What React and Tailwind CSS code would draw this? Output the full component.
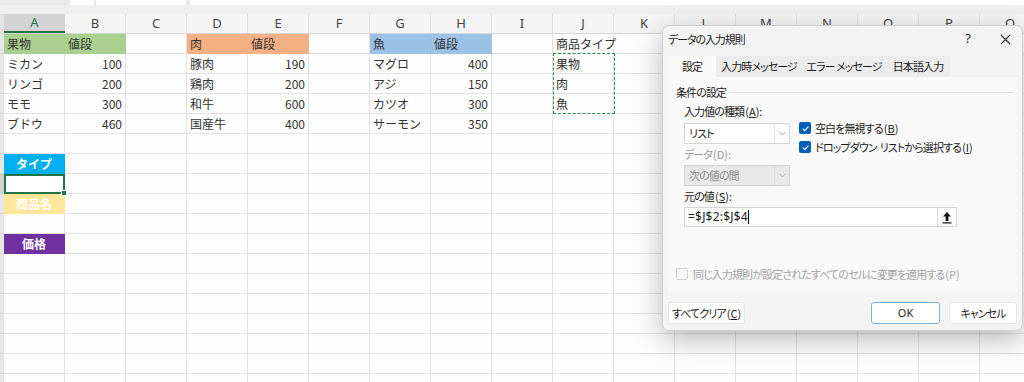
import React from 'react';
import { ChevronDown } from 'lucide-react';

const COLS = 'ABCDEFGHIJKLMNOPQ'.split('');
const ROW_COUNT = 18;

const GREEN = 'bg-[#a9d08e] border-[#a9d08e]';
const ORANGE = 'bg-[#f4b084] border-[#f4b084]';
const BLUE = 'bg-[#9bc2e6] border-[#9bc2e6]';

const cells = {
  '1A': { t: '果物', fill: GREEN },
  '1B': { t: '値段', fill: GREEN },
  '1D': { t: '肉', fill: ORANGE },
  '1E': { t: '値段', fill: ORANGE },
  '1G': { t: '魚', fill: BLUE },
  '1H': { t: '値段', fill: BLUE },
  '1J': { t: '商品タイプ' },
  '2A': { t: 'ミカン' }, '2B': { t: '100', num: true },
  '3A': { t: 'リンゴ' }, '3B': { t: '200', num: true },
  '4A': { t: 'モモ' }, '4B': { t: '300', num: true },
  '5A': { t: 'ブドウ' }, '5B': { t: '460', num: true },
  '2D': { t: '豚肉' }, '2E': { t: '190', num: true },
  '3D': { t: '鶏肉' }, '3E': { t: '200', num: true },
  '4D': { t: '和牛' }, '4E': { t: '600', num: true },
  '5D': { t: '国産牛' }, '5E': { t: '400', num: true },
  '2G': { t: 'マグロ' }, '2H': { t: '400', num: true },
  '3G': { t: 'アジ' }, '3H': { t: '150', num: true },
  '4G': { t: 'カツオ' }, '4H': { t: '300', num: true },
  '5G': { t: 'サーモン' }, '5H': { t: '350', num: true },
  '2J': { t: '果物' },
  '3J': { t: '肉' },
  '4J': { t: '魚' },
  '7A': { t: 'タイプ', fill: 'bg-[#00b0f0] border-[#00b0f0]', label: true },
  '8A': { selected: true },
  '9A': { t: '商品名', fill: 'bg-[#ffe699] border-[#ffe699]', label: true },
  '11A': { t: '価格', fill: 'bg-[#7030a0] border-[#7030a0]', label: true },
};

const Cell = ({ row, col }) => {
  const c = cells[`${row}${col}`] || {};
  if (c.selected) {
    return (
      <div className="relative w-[61px] h-[20px] shrink-0 border-2 border-[#217346] bg-white">
        <div className="absolute -right-[4px] -bottom-[4px] w-[6px] h-[6px] bg-[#217346] border border-white" />
      </div>
    );
  }
  const base = 'w-[61px] h-[20px] shrink-0 border-r border-b flex items-center px-[3px] whitespace-nowrap';
  const fill = c.fill || 'border-[#e2e2e2]';
  const align = c.label ? 'justify-center text-white font-bold' : c.num ? 'justify-end text-[#333]' : 'text-[#333]';
  return <div className={`${base} ${fill} ${align}`}>{c.t}</div>;
};

// access key hint like (A) — latin kept at normal spacing
const Key = ({ k, colon }) => (
  <span className="tracking-normal ml-[1px]">
    (<u>{k}</u>){colon ? ':' : ''}
  </span>
);

const Check = ({ on, disabled }) => (
  <span
    className={`w-[12px] h-[12px] shrink-0 rounded-[2px] flex items-center justify-center ${
      on ? 'bg-[#005fb8]' : 'border border-[#c4c4c4] bg-[#f7f7f7]'
    } ${disabled ? 'opacity-70' : ''}`}
  >
    {on && (
      <svg width="9" height="9" viewBox="0 0 10 10">
        <path d="M2 5.2 L4.2 7.3 L8.2 2.8" fill="none" stroke="white" strokeWidth="1.3" />
      </svg>
    )}
  </span>
);

const Dialog = () => (
  <div className="absolute left-[662px] top-[25px] w-[361px] h-[306px] rounded-[7px] border border-[#cfcfcf] bg-[#f3f3f3] shadow-[0_8px_28px_rgba(0,0,0,0.28)] text-[11px] tracking-[-0.9px] text-[#1b1b1b] [font-feature-settings:'palt'] flex flex-col">
    <div className="h-[26px] flex items-center pl-[5px] pr-[11px] shrink-0">
      <span className="tracking-[-1.1px]">データの入力規則</span>
      <span className="ml-auto text-[13px] tracking-normal mr-[29px] font-['Noto_Sans',sans-serif]">?</span>
      <svg width="11" height="11" viewBox="0 0 11 11">
        <path d="M1 1 L10 10 M10 1 L1 10" stroke="#333" strokeWidth="1.1" />
      </svg>
    </div>
    <div className="flex ml-[5px] mt-[4px] h-[21px] shrink-0">
      <div className="w-[48px] bg-[#f9f9f9] flex items-center justify-center">設定</div>
      <div className="flex bg-[#ececec]">
        <div className="w-[86px] flex items-center justify-center">入力時メッセージ</div>
        <div className="w-[84px] flex items-center justify-center">エラー&nbsp;メッセージ</div>
        <div className="w-[64px] flex items-center justify-center">日本語入力</div>
      </div>
    </div>
    <div className="mx-[5px] h-[215px] bg-[#f9f9f9] shrink-0 flex flex-col pl-[8px] pr-[4px]">
      <div className="flex items-center mt-[7px] h-[16px]">
        <span>条件の設定</span>
        <div className="flex-1 h-px bg-[#e3e3e3] ml-[3px]" />
      </div>
      <div className="flex pl-[8px] mt-[3px]">
        <div className="w-[106px] flex flex-col">
          <div className="h-[16px] flex items-center">入力値の種類<Key k="A" colon /></div>
          <div className="mt-[4px] h-[21px] border border-[#d4d4d4] bg-white flex items-center pl-[4px]">
            <span className="flex-1">リスト</span>
            <span className="w-[15px] h-full border-l border-[#e2e2e2] flex items-center justify-center">
              <ChevronDown size={11} strokeWidth={1.5} color="#777" />
            </span>
          </div>
          <div className="mt-[2px] h-[16px] flex items-center text-[#9a9a9a]">
            データ<span className="tracking-normal ml-[1px]">(D):</span>
          </div>
          <div className="mt-[3px] h-[21px] border border-[#d4d4d4] bg-[#e8e8e8] text-[#8c8c8c] flex items-center pl-[4px]">
            <span className="flex-1">次の値の間</span>
            <span className="w-[15px] h-full border-l border-[#d8d8d8] flex items-center justify-center">
              <ChevronDown size={11} strokeWidth={1.5} color="#8a8a8a" />
            </span>
          </div>
        </div>
        <div className="flex flex-col ml-[9px] mt-[19px] gap-[7px]">
          <div className="flex items-center gap-[4px] h-[12px]">
            <Check on />
            <span>空白を無視する<Key k="B" /></span>
          </div>
          <div className="flex items-center gap-[4px] h-[12px]">
            <Check on />
            <span>ドロップダウン&nbsp;&nbsp;リストから選択する<Key k="I" /></span>
          </div>
        </div>
      </div>
      <div className="pl-[8px] mt-[2px] h-[16px] flex items-center">元の値<Key k="S" colon /></div>
      <div className="ml-[8px] mt-[3px] w-[273px] h-[20px] border border-[#d4d4d4] bg-white flex items-center">
        <span className="pl-[3px] text-[12px] font-['Noto_Sans',sans-serif] tracking-[0.2px]">=$J$2:$J$4</span>
        <span className="w-px h-[14px] bg-black" />
        <span className="ml-auto w-[19px] h-full border-l border-[#dcdcdc] flex items-center justify-center">
          <svg width="10" height="13" viewBox="0 0 10 13">
            <path d="M5 1 L1 5.5 L3.6 5.5 L3.6 10 L6.4 10 L6.4 5.5 L9 5.5 Z" fill="#111" />
            <rect x="0.5" y="11.3" width="9" height="1.2" fill="#111" />
          </svg>
        </span>
      </div>
      <div className="mt-auto mb-[10px] flex items-center gap-[5px] text-[#a3a3a3]">
        <Check disabled />
        <span>
          同じ入力規則が設定されたすべてのセルに変更を適用する<span className="tracking-normal ml-[1px]">(P)</span>
        </span>
      </div>
    </div>
    <div className="flex mx-[5px] mt-[10px] h-[22px] shrink-0">
      <div className="w-[77px] bg-white border border-[#e5e5e5] rounded-[3px] flex items-center justify-center">
        すべてクリア<Key k="C" />
      </div>
      <div className="ml-auto w-[69px] bg-white border border-[#7fb0dc] rounded-[3px] flex items-center justify-center font-['Noto_Sans',sans-serif] text-[11px] tracking-normal">
        OK
      </div>
      <div className="ml-[9px] w-[68px] bg-white border border-[#e5e5e5] rounded-[3px] flex items-center justify-center">
        キャンセル
      </div>
    </div>
  </div>
);

export default function App() {
  return (
    <div className="relative w-[1024px] h-[382px] overflow-hidden bg-[#fdfdfd] font-['Noto_Sans_CJK_JP',sans-serif] text-[12px]">
      {/* toolbar remnant */}
      <div className="h-[5px] bg-[#e9e9e9] flex">
        <div className="w-[70px]" />
        <div className="w-[24px] bg-white" />
        <div className="w-[2px]" />
        <div className="w-[90px] bg-white" />
        <div className="w-[4px]" />
        <div className="flex-1 bg-white" />
      </div>
      <div className="h-[9px] bg-[#efefef]" />
      {/* column headers */}
      <div className="flex h-[20px] bg-[#f5f5f5] border-b border-[#d6d6d6] font-['Noto_Sans',sans-serif] text-[13px] text-[#444]">
        <div className="w-[4px] shrink-0 bg-[#e4e4e4]" />
        {COLS.map((c) =>
          c === 'A' ? (
            <div key={c} className="w-[61px] shrink-0 bg-[#d3d3d3] border-b-2 border-[#217346] flex items-center justify-center text-[#217346]">
              {c}
            </div>
          ) : (
            <div key={c} className="w-[61px] shrink-0 border-r border-[#e0e0e0] flex items-center justify-center">
              {c}
            </div>
          )
        )}
      </div>
      {/* grid */}
      <div className="relative">
        {Array.from({ length: ROW_COUNT }, (_, i) => i + 1).map((r) => (
          <div key={r} className="flex">
            <div className={`w-[4px] shrink-0 border-b border-[#d6d6d6] ${r === 8 ? 'bg-[#d0d0d0]' : 'bg-[#e6e6e6]'}`} />
            {COLS.map((c) => (
              <Cell key={c} row={r} col={c} />
            ))}
          </div>
        ))}
        <div className="absolute left-[553px] top-[19px] w-[62px] h-[61px] border border-dashed border-[#2e8b57]" />
      </div>
      <Dialog />
    </div>
  );
}
